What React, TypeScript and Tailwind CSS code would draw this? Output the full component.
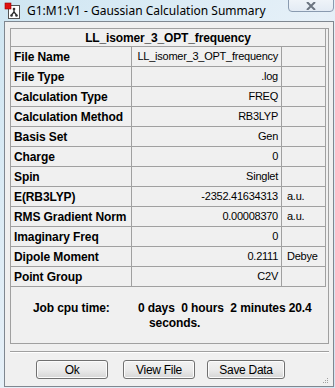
import React from "react";

const rows: [string, string, string][] = [
  ["File Name", "LL_isomer_3_OPT_frequency", ""],
  ["File Type", ".log", ""],
  ["Calculation Type", "FREQ", ""],
  ["Calculation Method", "RB3LYP", ""],
  ["Basis Set", "Gen", ""],
  ["Charge", "0", ""],
  ["Spin", "Singlet", ""],
  ["E(RB3LYP)", "-2352.41634313", "a.u."],
  ["RMS Gradient Norm", "0.00008370", "a.u."],
  ["Imaginary Freq", "0", ""],
  ["Dipole Moment", "0.2111", "Debye"],
  ["Point Group", "C2V", ""],
];

function AppIcon() {
  return (
    <svg width="18" height="18" viewBox="0 0 18 18" className="shrink-0">
      <rect x="5.5" y="3.5" width="11" height="13" fill="#ffffff" stroke="#555" />
      <rect x="2" y="1" width="6" height="6" fill="#e01010" stroke="#900" strokeWidth="0.6" />
      <line x1="11" y1="7" x2="11" y2="10" stroke="#222" strokeWidth="1.2" />
      <line x1="11" y1="10" x2="8.5" y2="13" stroke="#222" strokeWidth="1.2" />
      <line x1="11" y1="10" x2="13.5" y2="13" stroke="#222" strokeWidth="1.2" />
      <circle cx="11" cy="7" r="1.3" fill="#333" />
      <circle cx="8.5" cy="13.5" r="1.3" fill="#333" />
      <circle cx="13.5" cy="13.5" r="1.3" fill="#333" />
    </svg>
  );
}

function Btn({ label, w }: { label: string; w: string }) {
  return (
    <div
      className={`${w} h-[19px] rounded-[3px] border border-[#707070] bg-gradient-to-b from-[#f2f2f2] via-[#ebebeb] to-[#d6d6d6] flex items-center justify-center text-[12px] tracking-[-0.3px] text-black shadow-[inset_0_0_0_1px_#fcfcfc]`}
    >
      {label}
    </div>
  );
}

export default function App() {
  return (
    <div className="w-[335px] h-[388px] relative overflow-hidden bg-gradient-to-br from-[#cfe6f2] via-[#e6f0f8] to-[#d3e3f1] font-['Liberation_Sans',Arial,sans-serif] text-black">
      {/* Title bar */}
      <div className="h-[21px] flex items-center pl-[3px] gap-[6px]">
        <AppIcon />
        <span className="font-['Noto_Sans',sans-serif] text-[12px] text-black leading-none">
          G1:M1:V1 - Gaussian Calculation Summary
        </span>
      </div>
      <div className="absolute top-[-8px] left-[288px] w-[46px] h-[20px] rounded-b-[4px] border border-[#8a9bb0] bg-gradient-to-b from-[#f6f9fc] to-[#e3ebf4] flex items-end justify-center pb-[1px]">
        <svg width="12" height="8" viewBox="0 0 12 8">
          <path d="M2 0 L10 8 M10 0 L2 8" stroke="#6b7480" strokeWidth="2" />
        </svg>
      </div>

      {/* Client area */}
      <div className="ml-[4px] w-[330px] h-[366px] border border-[#7f8790] bg-[#f0f0f0] flex flex-col">
        {/* Group box */}
        <div className="mt-[6px] ml-[5px] w-[319px] h-[316px] border border-[#a0a0a0] flex flex-col">
          <div className="w-[315px] flex flex-col">
            <div className="h-[18px] border-b border-r border-[#a0a0a0] flex items-center justify-center font-bold text-[12px] tracking-[-0.15px]">
              LL_isomer_3_OPT_frequency
            </div>
            {rows.map(([l, v, u]) => (
              <div key={l} className="h-[20px] flex border-b border-[#a0a0a0]">
                <div className="w-[121px] border-r border-[#a0a0a0] flex items-center pl-[3px] font-bold text-[12px] tracking-[-0.1px]">
                  {l}
                </div>
                <div className="w-[150px] border-r border-[#a0a0a0] flex items-center justify-end pr-[3px] text-[11px] tracking-[-0.25px]">
                  {v}
                </div>
                <div className="w-[44px] border-r border-[#a0a0a0] flex items-center pl-[5px] text-[11px] tracking-[-0.25px]">
                  {u}
                </div>
              </div>
            ))}
          </div>
          <div className="mt-[14px] flex font-bold text-[12px] tracking-[-0.1px] leading-[15px]">
            <div className="ml-[22px] w-[105px]">Job cpu time:</div>
            <div className="flex flex-col">
              <span>0 days&nbsp;&nbsp;0 hours&nbsp;&nbsp;2 minutes 20.4</span>
              <span className="pl-[11px]">seconds.</span>
            </div>
          </div>
        </div>
        {/* Separator */}
        <div className="mt-[7px] ml-[5px] w-[319px] h-[2px] border-t border-[#a0a0a0] border-b border-b-white" />
        {/* Buttons */}
        <div className="mt-[7px] flex pl-[31px]">
          <Btn label="Ok" w="w-[72px]" />
          <div className="w-[15px]" />
          <Btn label="View File" w="w-[72px]" />
          <div className="w-[12px]" />
          <Btn label="Save Data" w="w-[78px]" />
        </div>
        <div className="relative flex-1">
          <div className="absolute right-[5px] bottom-[3px] grid grid-cols-3 gap-[1px]">
            <span />
            <span />
            <span className="w-[1px] h-[1px] bg-[#a0a0a0]" />
            <span />
            <span className="w-[1px] h-[1px] bg-[#a0a0a0]" />
            <span className="w-[1px] h-[1px] bg-[#a0a0a0]" />
            <span className="w-[1px] h-[1px] bg-[#a0a0a0]" />
            <span className="w-[1px] h-[1px] bg-[#a0a0a0]" />
            <span className="w-[1px] h-[1px] bg-[#a0a0a0]" />
          </div>
        </div>
      </div>
    </div>
  );
}
